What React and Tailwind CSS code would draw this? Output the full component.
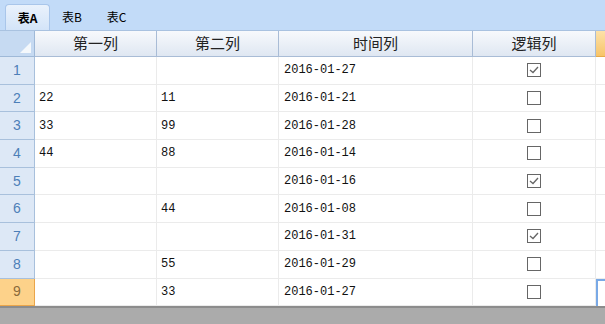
import React from "react";

const rows = [
  { a: "", b: "", d: "2016-01-27", c: true },
  { a: "22", b: "11", d: "2016-01-21", c: false },
  { a: "33", b: "99", d: "2016-01-28", c: false },
  { a: "44", b: "88", d: "2016-01-14", c: false },
  { a: "", b: "", d: "2016-01-16", c: true },
  { a: "", b: "44", d: "2016-01-08", c: false },
  { a: "", b: "", d: "2016-01-31", c: true },
  { a: "", b: "55", d: "2016-01-29", c: false },
  { a: "", b: "33", d: "2016-01-27", c: false },
];

const cjk = { fontFamily: '"Noto Sans CJK SC", sans-serif' };
const mono = { fontFamily: '"Liberation Mono", "Noto Sans CJK SC", monospace' };

const Check = ({ on }) => (
  <span className="w-[14px] h-[14px] border border-[#666] bg-white flex items-center justify-center">
    {on && (
      <svg width="10" height="8" viewBox="0 0 10 8">
        <path d="M1 4 L4 6.5 L9 1" fill="none" stroke="#666" strokeWidth="1.3" />
      </svg>
    )}
  </span>
);

export default function App() {
  return (
    <div className="w-[605px] h-[324px] overflow-hidden flex flex-col bg-white">
      {/* tabs */}
      <div className="h-[30px] bg-[#c2dbf8] flex items-end pl-[5px] text-[12px] text-black" style={cjk}>
        <div className="h-[26px] w-[45px] rounded-t-[4px] border border-b-0 border-[#a9c6ea] bg-gradient-to-b from-[#eaf2fc] to-[#d3e4f8] flex items-center justify-center font-bold">
          表A
        </div>
        <div className="h-[26px] w-[44px] flex items-center justify-center">表B</div>
        <div className="h-[26px] w-[45px] flex items-center justify-center">表C</div>
      </div>

      {/* header */}
      <div className="h-[27px] flex border-t border-[#a9c2e0]" style={cjk}>
        <div className="w-[35px] bg-[#c6daf2] border-r border-b border-[#9fb9d8] relative">
          <div className="absolute right-[3px] bottom-[3px] w-0 h-0 border-l-[11px] border-l-transparent border-b-[11px] border-b-white/80" />
        </div>
        {[
          ["第一列", "w-[122px]"],
          ["第二列", "w-[122px]"],
          ["时间列", "w-[194px]"],
          ["逻辑列", "w-[123px]"],
        ].map(([t, w]) => (
          <div
            key={t}
            className={`${w} bg-gradient-to-b from-[#f7f9fc] to-[#dfe7f2] border-r border-b border-[#a9bcd6] flex items-center justify-center text-[15px] text-[#222]`}
          >
            {t}
          </div>
        ))}
        <div className="flex-1 bg-gradient-to-b from-[#fde2a8] to-[#f7c468] border-b border-[#e6a94a]" />
      </div>

      {/* body */}
      {rows.map((r, i) => {
        const last = i === rows.length - 1;
        return (
          <div key={i} className="h-[27.7px] flex text-[12px] text-[#111]" style={mono}>
            <div
              className={`w-[35px] flex items-center justify-center text-[14px] border-r border-b ${
                last
                  ? "bg-[#fdd28a] border-[#eaa54a] text-[#8a6a3a]"
                  : "bg-[#dde8f6] border-[#a8c0dc] text-[#4d7fb8]"
              }`}
              style={{ fontFamily: '"Liberation Sans", sans-serif' }}
            >
              {i + 1}
            </div>
            <div className="w-[122px] border-r border-b border-[#ebebeb] flex items-center pl-[4px]">{r.a}</div>
            <div className="w-[122px] border-r border-b border-[#ebebeb] flex items-center pl-[4px]">{r.b}</div>
            <div className="w-[194px] border-r border-b border-[#ebebeb] flex items-center pl-[5px]">{r.d}</div>
            <div className="w-[123px] border-r border-b border-[#ebebeb] flex items-center justify-center">
              <Check on={r.c} />
            </div>
            <div className={`flex-1 ${last ? "border-l-2 border-t-2 border-[#79a9e6]" : "border-b border-[#ebebeb]"}`} />
          </div>
        );
      })}

      <div className="flex-1 bg-[#ababab] border-t-2 border-[#8c8c8c]" />
    </div>
  );
}
